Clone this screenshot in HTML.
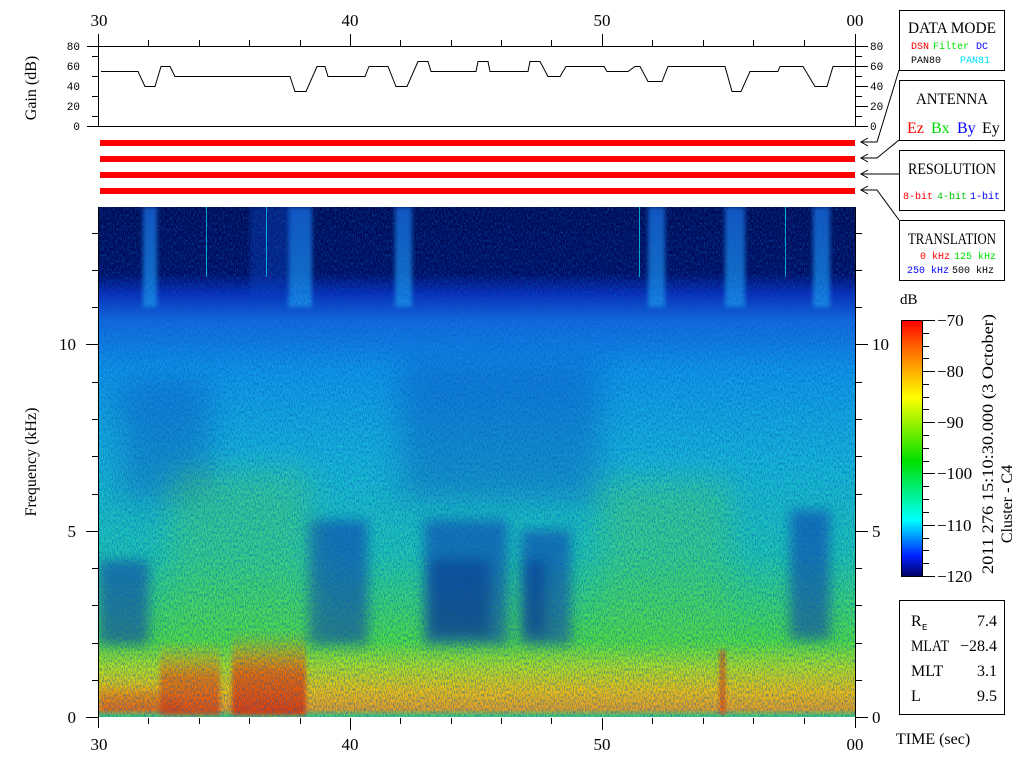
<!DOCTYPE html>
<html><head><meta charset="utf-8"><style>
html,body{margin:0;padding:0;background:#fff;}
svg{display:block;}
text{font-family:"Liberation Serif",serif;}
.m text, text.m{font-family:"Liberation Mono",monospace;}
</style></head><body>
<svg width="1024" height="768" viewBox="0 0 1024 768" xmlns="http://www.w3.org/2000/svg">
<defs>
<linearGradient id="sp" x1="0" y1="0" x2="0" y2="1">
<stop offset="0" stop-color="#000850"/>
<stop offset="0.13" stop-color="#000a5c"/>
<stop offset="0.17" stop-color="#0a2ab8"/>
<stop offset="0.22" stop-color="#1468e0"/>
<stop offset="0.32" stop-color="#1098e8"/>
<stop offset="0.5" stop-color="#18b8d8"/>
<stop offset="0.68" stop-color="#20c8b0"/>
<stop offset="0.85" stop-color="#50e040"/>
<stop offset="0.9" stop-color="#b0e020"/>
<stop offset="0.95" stop-color="#f0c010"/>
<stop offset="0.985" stop-color="#e8a020"/>
<stop offset="1" stop-color="#30d080"/>
</linearGradient>
<linearGradient id="col" x1="0" y1="0" x2="0" y2="1">
<stop offset="0" stop-color="#1a70e8"/>
<stop offset="1" stop-color="#20a0f0"/>
</linearGradient>
<linearGradient id="cb" x1="0" y1="0" x2="0" y2="1">
<stop offset="0" stop-color="#ff0000"/>
<stop offset="0.1" stop-color="#ff6000"/>
<stop offset="0.3" stop-color="#ffff00"/>
<stop offset="0.55" stop-color="#00e000"/>
<stop offset="0.78" stop-color="#00ffff"/>
<stop offset="0.92" stop-color="#0020ff"/>
<stop offset="1" stop-color="#000060"/>
</linearGradient>
<linearGradient id="red" x1="0" y1="0" x2="0" y2="1">
<stop offset="0" stop-color="#f0a000" stop-opacity="0"/>
<stop offset="0.5" stop-color="#f06000"/>
<stop offset="1" stop-color="#e83000"/>
</linearGradient>
<filter id="bl" x="-20%" y="-20%" width="140%" height="140%"><feGaussianBlur stdDeviation="6"/></filter>
<filter id="bl3" x="-30%" y="-30%" width="160%" height="160%"><feGaussianBlur stdDeviation="15"/></filter>
<filter id="bl2" x="-20%" y="-20%" width="140%" height="140%"><feGaussianBlur stdDeviation="2"/></filter>
<filter id="nz" x="0" y="0" width="100%" height="100%">
<feTurbulence type="fractalNoise" baseFrequency="0.9 0.35" numOctaves="2" seed="3"/>
<feColorMatrix type="matrix" values="0 0 0 0 0  0 0 0 0 0.1  0 0 0 0 0.5  0 0 0 -3 1.8"/>
</filter>
<clipPath id="cp"><rect x="99" y="207" width="756" height="510"/></clipPath>
</defs>

<g font-size="17" text-anchor="middle">
<text x="99" y="26">30</text><text x="350" y="26">40</text><text x="602" y="26">50</text><text x="855" y="26">00</text>
</g>
<g stroke="#000" stroke-width="1" fill="none">
<line x1="87" y1="46.5" x2="856" y2="46.5"/>
<line x1="87" y1="126.5" x2="856" y2="126.5"/>
<line x1="98.5" y1="34" x2="98.5" y2="127"/>
<line x1="855.5" y1="34" x2="855.5" y2="127"/>
<line x1="148.5" y1="40" x2="148.5" y2="46"/><line x1="199.5" y1="40" x2="199.5" y2="46"/><line x1="249.5" y1="40" x2="249.5" y2="46"/><line x1="300.5" y1="40" x2="300.5" y2="46"/><line x1="350.5" y1="34" x2="350.5" y2="46"/>
<line x1="400.5" y1="40" x2="400.5" y2="46"/><line x1="451.5" y1="40" x2="451.5" y2="46"/><line x1="501.5" y1="40" x2="501.5" y2="46"/><line x1="551.5" y1="40" x2="551.5" y2="46"/><line x1="602.5" y1="34" x2="602.5" y2="46"/>
<line x1="652.5" y1="40" x2="652.5" y2="46"/><line x1="703.5" y1="40" x2="703.5" y2="46"/><line x1="753.5" y1="40" x2="753.5" y2="46"/><line x1="804.5" y1="40" x2="804.5" y2="46"/>
<line x1="92" y1="56.5" x2="98" y2="56.5"/><line x1="92" y1="76.5" x2="98" y2="76.5"/><line x1="92" y1="96.5" x2="98" y2="96.5"/><line x1="92" y1="116.5" x2="98" y2="116.5"/>
<line x1="856" y1="56.5" x2="862" y2="56.5"/><line x1="856" y1="76.5" x2="862" y2="76.5"/><line x1="856" y1="96.5" x2="862" y2="96.5"/><line x1="856" y1="116.5" x2="862" y2="116.5"/>
<line x1="856" y1="66.5" x2="868" y2="66.5"/><line x1="856" y1="86.5" x2="868" y2="86.5"/><line x1="856" y1="106.5" x2="868" y2="106.5"/><line x1="856" y1="46.5" x2="868" y2="46.5"/><line x1="856" y1="126.5" x2="868" y2="126.5"/>
</g>
<g class="m" font-size="11" text-anchor="end">
<text x="80" y="50">80</text><text x="80" y="70">60</text><text x="80" y="90">40</text><text x="80" y="110">20</text><text x="80" y="130">0</text>
</g>
<g class="m" font-size="11">
<text x="870" y="50">80</text><text x="870" y="70">60</text><text x="870" y="90">40</text><text x="870" y="110">20</text><text x="870" y="130">0</text>
</g>
<text transform="translate(36,88) rotate(-90)" font-size="16" text-anchor="middle">Gain (dB)</text>
<polyline fill="none" stroke="#000" stroke-width="1" points="101,71.5 138,71.5 145,86.5 155,86.5 161,66.5 170,66.5 175,76.5 290,76.5 295,91.5 306,91.5 317,66.5 325,66.5 328,76.5 365,76.5 369,66.5 388,66.5 396,86.5 407,86.5 418,61.5 428,61.5 431,71.5 476,71.5 478,61.5 488,61.5 490,71.5 528,71.5 530,61.5 540,61.5 548,76.5 560,76.5 566,66.5 604,66.5 607,71.5 628,71.5 635,66.5 640,66.5 648,81.5 662,81.5 668,66.5 725,66.5 732,91.5 741,91.5 750,71.5 778,71.5 780,66.5 803,66.5 815,86.5 827,86.5 833,66.5 855,66.5"/>

<rect x="100" y="140" width="755" height="6" fill="#ff0000"/>
<rect x="100" y="156" width="755" height="6" fill="#ff0000"/>
<rect x="100" y="172" width="755" height="6" fill="#ff0000"/>
<rect x="100" y="188" width="755" height="6" fill="#ff0000"/>

<g clip-path="url(#cp)">
<rect x="99" y="207" width="756" height="510" fill="url(#sp)"/>
<g fill="url(#col)" opacity="0.75" filter="url(#bl2)">
<rect x="143" y="207" width="14" height="100"/>
<rect x="288" y="207" width="24" height="100"/>
<rect x="395" y="207" width="17" height="100"/>
<rect x="648" y="207" width="17" height="100"/>
<rect x="725" y="207" width="20" height="100"/>
<rect x="813" y="207" width="17" height="100"/>
</g>
<rect x="250" y="207" width="40" height="90" fill="#0a40c0" opacity="0.4" filter="url(#bl2)"/>
<g fill="#00e0f0" opacity="0.8">
<rect x="206" y="207" width="1" height="70"/><rect x="266" y="207" width="1" height="70"/><rect x="639" y="207" width="1" height="70"/><rect x="785" y="207" width="1" height="70"/>
</g>
<g fill="#0830b0" opacity="0.3" filter="url(#bl3)">
<rect x="120" y="380" width="90" height="120"/>
<rect x="400" y="360" width="200" height="140"/>
</g>
<g fill="#0830b0" opacity="0.55" filter="url(#bl)">
<rect x="99" y="560" width="50" height="85"/>
<rect x="308" y="520" width="60" height="125"/>
<rect x="424" y="520" width="84" height="125"/>
<rect x="521" y="530" width="50" height="115"/>
<rect x="790" y="510" width="40" height="130"/>
</g>
<g fill="#001880" opacity="0.4" filter="url(#bl)">
<rect x="430" y="560" width="60" height="75"/>
<rect x="525" y="560" width="20" height="75"/>
</g>
<g fill="#60e040" opacity="0.35" filter="url(#bl3)">
<rect x="170" y="470" width="140" height="175"/>
<rect x="600" y="480" width="130" height="165"/>
</g>
<g filter="url(#bl2)">
<rect x="160" y="640" width="60" height="75" fill="url(#red)" opacity="0.75"/>
<rect x="232" y="630" width="74" height="85" fill="url(#red)" opacity="0.9"/>
<rect x="720" y="650" width="5" height="65" fill="#e83000" opacity="0.7"/>
<rect x="100" y="680" width="80" height="32" fill="url(#red)" opacity="0.5"/>
</g>
<rect x="99" y="207" width="756" height="510" filter="url(#nz)" opacity="0.5"/>
</g>

<g stroke="#000" stroke-width="1">
<line x1="98.5" y1="207" x2="98.5" y2="728"/>
<line x1="855.5" y1="207" x2="855.5" y2="728"/>
<line x1="86" y1="717.5" x2="98" y2="717.5"/><line x1="86" y1="531.5" x2="98" y2="531.5"/><line x1="86" y1="344.5" x2="98" y2="344.5"/>
<line x1="856" y1="717.5" x2="868" y2="717.5"/><line x1="856" y1="531.5" x2="868" y2="531.5"/><line x1="856" y1="344.5" x2="868" y2="344.5"/>
<line x1="92" y1="680.5" x2="98" y2="680.5"/><line x1="92" y1="643.5" x2="98" y2="643.5"/><line x1="92" y1="605.5" x2="98" y2="605.5"/><line x1="92" y1="568.5" x2="98" y2="568.5"/>
<line x1="92" y1="494.5" x2="98" y2="494.5"/><line x1="92" y1="456.5" x2="98" y2="456.5"/><line x1="92" y1="419.5" x2="98" y2="419.5"/><line x1="92" y1="382.5" x2="98" y2="382.5"/>
<line x1="92" y1="307.5" x2="98" y2="307.5"/><line x1="92" y1="270.5" x2="98" y2="270.5"/><line x1="92" y1="233.5" x2="98" y2="233.5"/>
<line x1="856" y1="680.5" x2="862" y2="680.5"/><line x1="856" y1="643.5" x2="862" y2="643.5"/><line x1="856" y1="605.5" x2="862" y2="605.5"/><line x1="856" y1="568.5" x2="862" y2="568.5"/>
<line x1="856" y1="494.5" x2="862" y2="494.5"/><line x1="856" y1="456.5" x2="862" y2="456.5"/><line x1="856" y1="419.5" x2="862" y2="419.5"/><line x1="856" y1="382.5" x2="862" y2="382.5"/>
<line x1="856" y1="307.5" x2="862" y2="307.5"/><line x1="856" y1="270.5" x2="862" y2="270.5"/><line x1="856" y1="233.5" x2="862" y2="233.5"/>
<line x1="350.5" y1="718" x2="350.5" y2="730"/><line x1="602.5" y1="718" x2="602.5" y2="730"/>
<line x1="148.5" y1="718" x2="148.5" y2="724"/><line x1="199.5" y1="718" x2="199.5" y2="724"/><line x1="249.5" y1="718" x2="249.5" y2="724"/><line x1="300.5" y1="718" x2="300.5" y2="724"/>
<line x1="400.5" y1="718" x2="400.5" y2="724"/><line x1="451.5" y1="718" x2="451.5" y2="724"/><line x1="501.5" y1="718" x2="501.5" y2="724"/><line x1="551.5" y1="718" x2="551.5" y2="724"/>
<line x1="652.5" y1="718" x2="652.5" y2="724"/><line x1="703.5" y1="718" x2="703.5" y2="724"/><line x1="753.5" y1="718" x2="753.5" y2="724"/><line x1="804.5" y1="718" x2="804.5" y2="724"/>
</g>
<g font-size="17" text-anchor="end">
<text x="76" y="723">0</text><text x="76" y="537">5</text><text x="76" y="350">10</text>
</g>
<g font-size="17">
<text x="872" y="723">0</text><text x="872" y="537">5</text><text x="872" y="350">10</text>
</g>
<g font-size="17" text-anchor="middle">
<text x="99" y="750">30</text><text x="350" y="750">40</text><text x="602" y="750">50</text><text x="855" y="750">00</text>
</g>
<text transform="translate(36,462) rotate(-90)" font-size="16" text-anchor="middle">Frequency (kHz)</text>
<text x="896" y="744" font-size="16">TIME (sec)</text>

<g fill="#fff" stroke="#000" stroke-width="1">
<rect x="899.5" y="10.5" width="105" height="60"/>
<rect x="899.5" y="80.5" width="105" height="60"/>
<rect x="899.5" y="150.5" width="105" height="60"/>
<rect x="899.5" y="220.5" width="105" height="60"/>
<rect x="899.5" y="600.5" width="105" height="114"/>
</g>
<g stroke="#000" stroke-width="1" fill="none">
<polyline points="899,70 877,142 861,142"/>
<polyline points="899,140 877,158 861,158"/>
<polyline points="899,174 861,174"/>
<polyline points="899,220 877,190 861,190"/>
<polyline points="868,138 861,142 868,146"/><polyline points="868,154 861,158 868,162"/>
<polyline points="868,170 861,174 868,178"/><polyline points="868,186 861,190 868,194"/>
</g>
<g font-size="16" text-anchor="middle">
<text x="952" y="33" textLength="88" lengthAdjust="spacingAndGlyphs">DATA MODE</text>
<text x="952" y="104" textLength="72" lengthAdjust="spacingAndGlyphs">ANTENNA</text>
<text x="952" y="174" textLength="88" lengthAdjust="spacingAndGlyphs">RESOLUTION</text>
<text x="952" y="244" textLength="88" lengthAdjust="spacingAndGlyphs">TRANSLATION</text>
</g>
<g class="m" font-size="10">
<text x="911" y="49" fill="#ff0000">DSN</text><text x="933" y="49" fill="#00e000">Filter</text><text x="976" y="49" fill="#0000ff">DC</text>
<text x="911" y="63" fill="#000">PAN80</text><text x="960" y="63" fill="#00e0ff">PAN81</text>
<text x="903" y="199" fill="#ff0000">8-bit</text><text x="937" y="199" fill="#00c000">4-bit</text><text x="970" y="199" fill="#0000ff">1-bit</text>
<text x="920" y="259" fill="#ff0000">0 kHz</text><text x="954" y="259" fill="#00e000">125 kHz</text>
<text x="907" y="273" fill="#0000ff">250 kHz</text><text x="952" y="273" fill="#000">500 kHz</text>
</g>
<g font-size="16">
<text x="907" y="133" fill="#ff0000">Ez</text><text x="931" y="133" fill="#00e000">Bx</text><text x="957" y="133" fill="#0000ff">By</text><text x="982" y="133" fill="#000">Ey</text>
</g>

<text x="900" y="304" font-size="15">dB</text>
<rect x="901.5" y="320.5" width="21" height="256" fill="url(#cb)" stroke="#000" stroke-width="1"/>
<g stroke="#000" stroke-width="1">
<line x1="923" y1="320.5" x2="935" y2="320.5"/><line x1="923" y1="371.5" x2="935" y2="371.5"/><line x1="923" y1="422.5" x2="935" y2="422.5"/><line x1="923" y1="473.5" x2="935" y2="473.5"/><line x1="923" y1="525.5" x2="935" y2="525.5"/><line x1="923" y1="576.5" x2="935" y2="576.5"/>
<line x1="923" y1="333.5" x2="929" y2="333.5"/><line x1="923" y1="346.5" x2="929" y2="346.5"/><line x1="923" y1="358.5" x2="929" y2="358.5"/>
<line x1="923" y1="384.5" x2="929" y2="384.5"/><line x1="923" y1="397.5" x2="929" y2="397.5"/><line x1="923" y1="409.5" x2="929" y2="409.5"/>
<line x1="923" y1="435.5" x2="929" y2="435.5"/><line x1="923" y1="448.5" x2="929" y2="448.5"/><line x1="923" y1="461.5" x2="929" y2="461.5"/>
<line x1="923" y1="486.5" x2="929" y2="486.5"/><line x1="923" y1="499.5" x2="929" y2="499.5"/><line x1="923" y1="512.5" x2="929" y2="512.5"/>
<line x1="923" y1="538.5" x2="929" y2="538.5"/><line x1="923" y1="550.5" x2="929" y2="550.5"/><line x1="923" y1="563.5" x2="929" y2="563.5"/>
</g>
<g font-size="17">
<text x="937" y="326">−70</text><text x="937" y="377">−80</text><text x="937" y="428">−90</text><text x="937" y="479">−100</text><text x="937" y="531">−110</text><text x="937" y="582">−120</text>
</g>
<text transform="translate(993,574) rotate(-90)" font-size="16" textLength="260" lengthAdjust="spacingAndGlyphs">2011 276 15:10:30.000 (3 October)</text>
<text transform="translate(1012,504) rotate(-90)" font-size="16" text-anchor="middle">Cluster - C4</text>

<g font-size="16">
<text x="911" y="626">R</text><text x="922" y="630" class="m" font-size="9">E</text><text x="997" y="626" text-anchor="end">7.4</text>
<text x="911" y="651" textLength="38" lengthAdjust="spacingAndGlyphs">MLAT</text><text x="997" y="651" text-anchor="end">−28.4</text>
<text x="911" y="676">MLT</text><text x="997" y="676" text-anchor="end">3.1</text>
<text x="911" y="701">L</text><text x="997" y="701" text-anchor="end">9.5</text>
</g>
</svg>
</body></html>
